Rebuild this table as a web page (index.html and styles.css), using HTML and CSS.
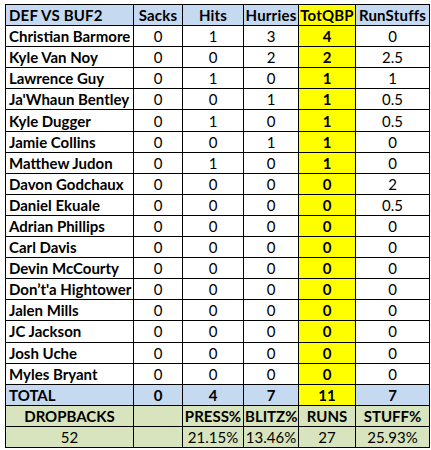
FILE: index.html
```html
<!DOCTYPE html>
<html lang="en">
<head>
  <meta charset="UTF-8" />
  <title>DEF VS BUF2</title>
  <link rel="stylesheet" href="styles.css">
</head>
<body>
  <table class="stats">
    <colgroup>
      <col class="c-name">
      <col class="c-sacks">
      <col class="c-hits">
      <col class="c-hurries">
      <col class="c-qbp">
      <col class="c-run">
    </colgroup>
    <thead>
      <tr class="head">
        <th class="name">DEF VS BUF2</th>
        <th>Sacks</th>
        <th>Hits</th>
        <th>Hurries</th>
        <th class="qbp">TotQBP</th>
        <th>RunStuffs</th>
      </tr>
    </thead>
    <tbody>
      <tr><td class="name">Christian Barmore</td><td>0</td><td>1</td><td>3</td><td class="qbp">4</td><td>0</td></tr>
      <tr><td class="name">Kyle Van Noy</td><td>0</td><td>0</td><td>2</td><td class="qbp">2</td><td>2.5</td></tr>
      <tr><td class="name">Lawrence Guy</td><td>0</td><td>1</td><td>0</td><td class="qbp">1</td><td>1</td></tr>
      <tr><td class="name">Ja'Whaun Bentley</td><td>0</td><td>0</td><td>1</td><td class="qbp">1</td><td>0.5</td></tr>
      <tr><td class="name">Kyle Dugger</td><td>0</td><td>1</td><td>0</td><td class="qbp">1</td><td>0.5</td></tr>
      <tr><td class="name">Jamie Collins</td><td>0</td><td>0</td><td>1</td><td class="qbp">1</td><td>0</td></tr>
      <tr><td class="name">Matthew Judon</td><td>0</td><td>1</td><td>0</td><td class="qbp">1</td><td>0</td></tr>
      <tr><td class="name">Davon Godchaux</td><td>0</td><td>0</td><td>0</td><td class="qbp">0</td><td>2</td></tr>
      <tr><td class="name">Daniel Ekuale</td><td>0</td><td>0</td><td>0</td><td class="qbp">0</td><td>0.5</td></tr>
      <tr><td class="name">Adrian Phillips</td><td>0</td><td>0</td><td>0</td><td class="qbp">0</td><td>0</td></tr>
      <tr><td class="name">Carl Davis</td><td>0</td><td>0</td><td>0</td><td class="qbp">0</td><td>0</td></tr>
      <tr><td class="name">Devin McCourty</td><td>0</td><td>0</td><td>0</td><td class="qbp">0</td><td>0</td></tr>
      <tr><td class="name">Don’t'a Hightower</td><td>0</td><td>0</td><td>0</td><td class="qbp">0</td><td>0</td></tr>
      <tr><td class="name">Jalen Mills</td><td>0</td><td>0</td><td>0</td><td class="qbp">0</td><td>0</td></tr>
      <tr><td class="name">JC Jackson</td><td>0</td><td>0</td><td>0</td><td class="qbp">0</td><td>0</td></tr>
      <tr><td class="name">Josh Uche</td><td>0</td><td>0</td><td>0</td><td class="qbp">0</td><td>0</td></tr>
      <tr><td class="name">Myles Bryant</td><td>0</td><td>0</td><td>0</td><td class="qbp">0</td><td>0</td></tr>
      <tr class="total"><td class="name">TOTAL</td><td>0</td><td>4</td><td>7</td><td class="qbp">11</td><td>7</td></tr>
      <tr class="summary label"><td>DROPBACKS</td><td></td><td>PRESS%</td><td>BLITZ%</td><td>RUNS</td><td>STUFF%</td></tr>
      <tr class="summary"><td>52</td><td></td><td>21.15%</td><td>13.46%</td><td>27</td><td>25.93%</td></tr>
    </tbody>
  </table>
</body>
</html>
```

FILE: styles.css
```css
* {
  box-sizing: border-box;
}

body {
  margin: 4px 0 0 5px;
  background: #fff;
  font-family: Lato, "Open Sans", sans-serif;
  font-size: 15px;
  color: #000;
}

.stats {
  border-collapse: collapse;
  table-layout: fixed;
  width: 424px;
}

.c-name { width: 128px; }
.c-sacks { width: 49px; }
.c-hits { width: 61px; }
.c-hurries { width: 55px; }
.c-qbp { width: 57px; }
.c-run { width: 74px; }

.stats th,
.stats td {
  border: 1px solid #000;
  height: 21.1px;
  padding: 0 1px;
  text-align: center;
  line-height: 18px;
  white-space: nowrap;
  overflow: hidden;
}

.stats th {
  font-weight: 700;
  letter-spacing: 0.2px;
}

.head {
  background: #c5d9f1;
}

.stats .name {
  text-align: left;
  font-weight: 700;
  padding-left: 3px;
}

.stats .qbp {
  background: #ffff00;
  font-weight: 700;
}

.total td {
  background: #c5d9f1;
  font-weight: 700;
}

.total .qbp {
  background: #ffff00;
}

.summary td {
  background: #d7e4bd;
}

.summary.label td {
  font-weight: 700;
}
```
